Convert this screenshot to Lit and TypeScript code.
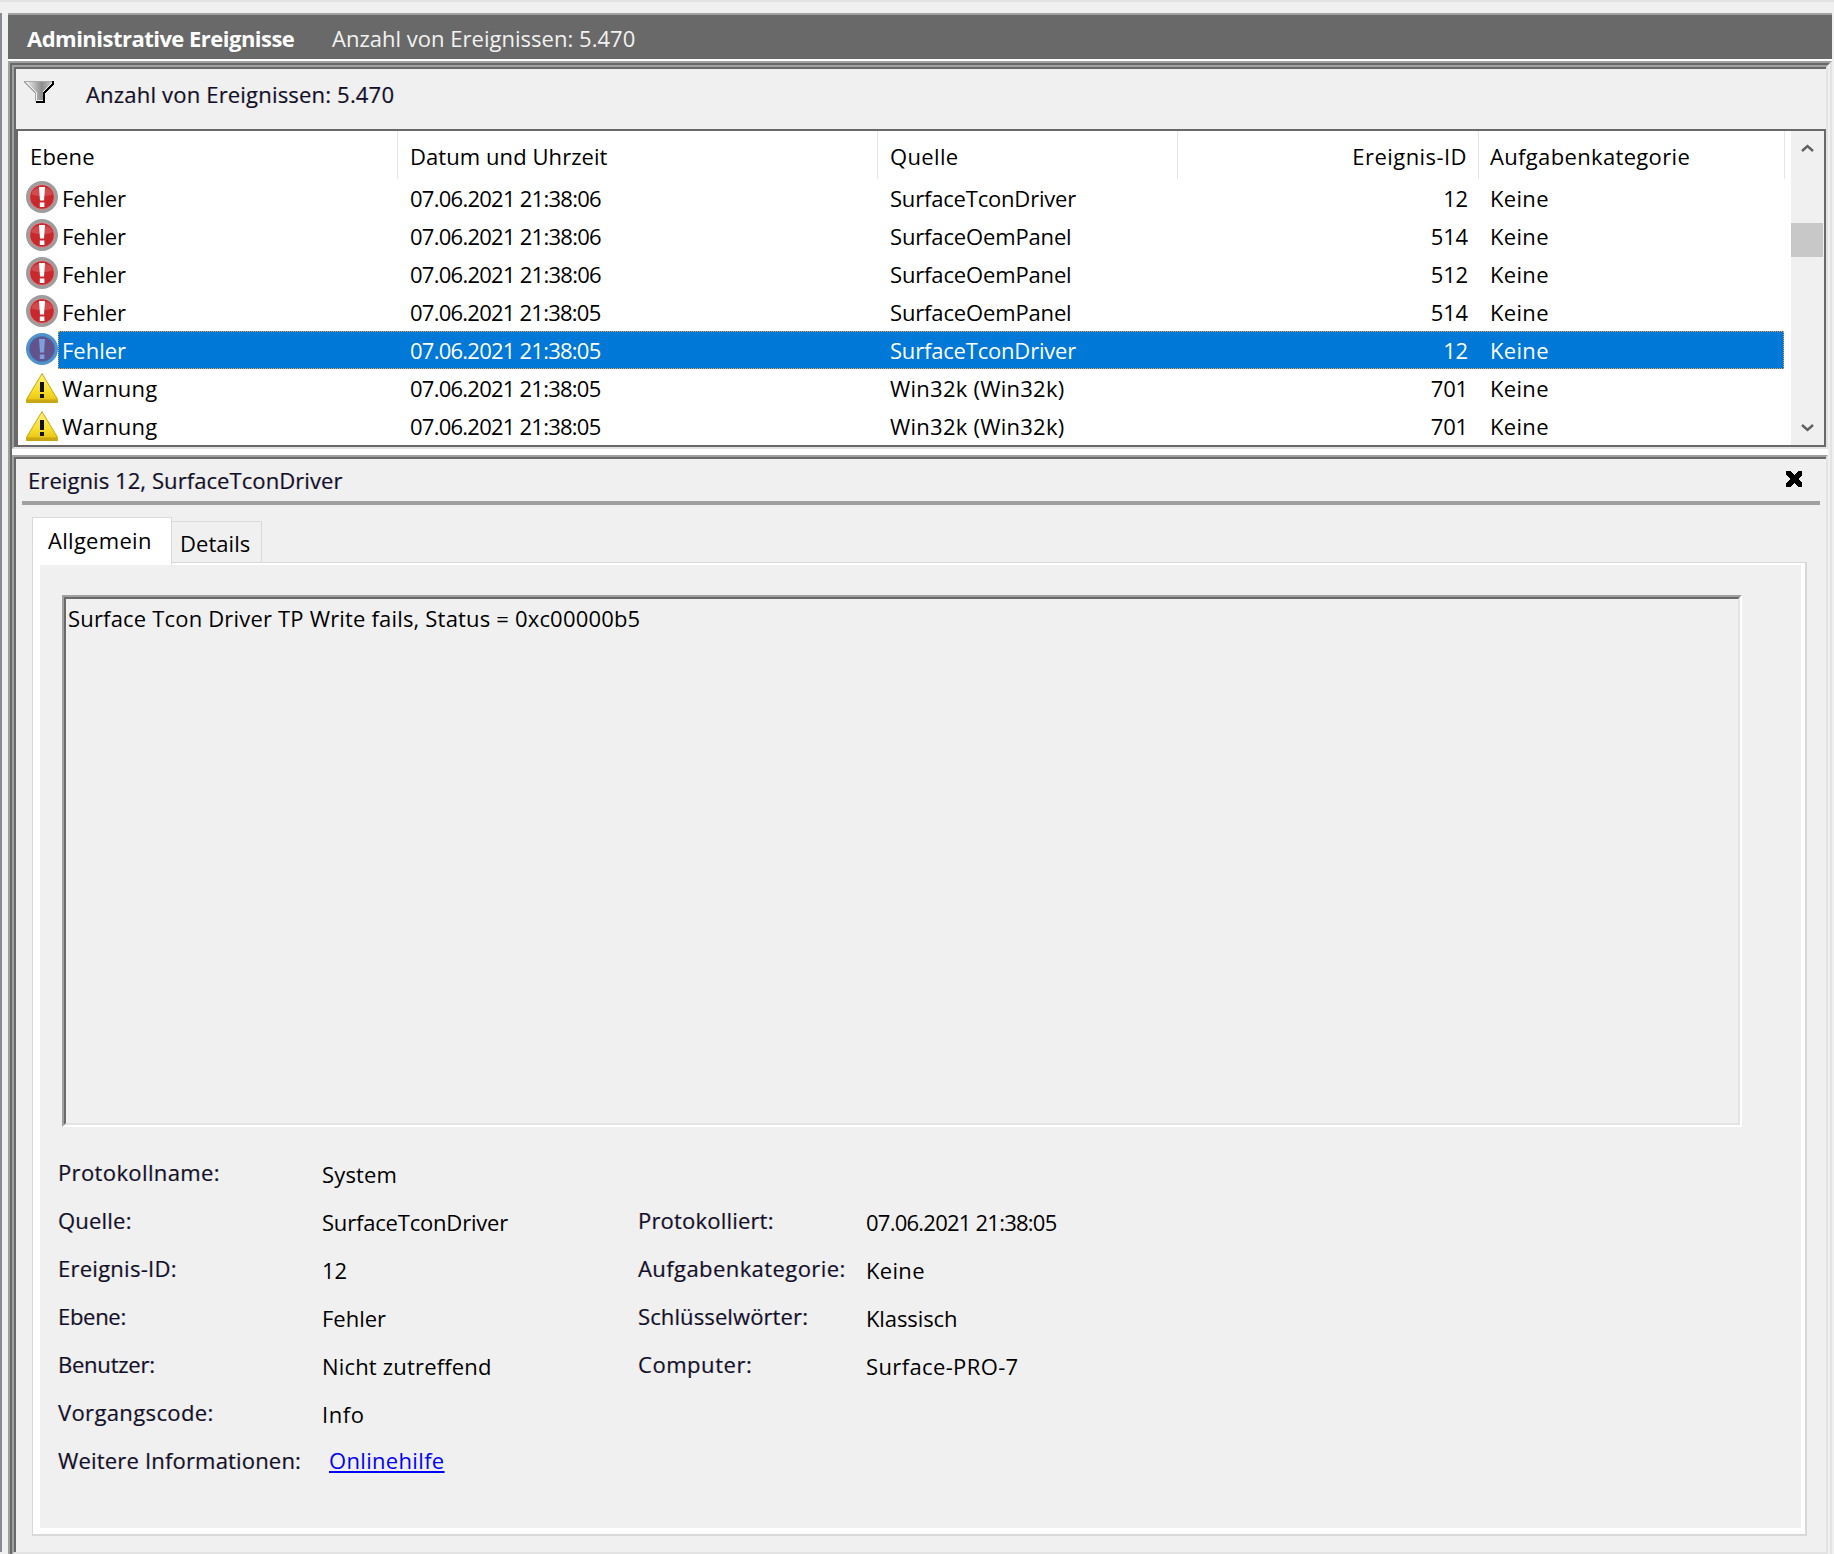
import { LitElement, html, css, svg } from "lit";
import { customElement } from "lit/decorators.js";
import { styleMap } from "lit/directives/style-map.js";

/* Letter spacing per string: Open Sans stands in for a narrower UI face, and digits and
   camel-case words differ in width from plain words, so the fit is data for each text. */
const fit: Record<string, number> = {
  "Administrative Ereignisse": -0.52,
  "Ebene": 0.17, "Datum und Uhrzeit": 0.07, "Quelle": 0.35, "Ereignis-ID": 0.44, "Aufgabenkategorie": 0.34,
  "Fehler": -0.02, "Warnung": 0.2, "Keine": 0.32,
  "07.06.2021 21:38:06": -0.74, "07.06.2021 21:38:05": -0.76,
  "SurfaceTconDriver": -0.19, "SurfaceOemPanel": -0.15, "Win32k (Win32k)": 0.24,
  "12": -0.2, "514": -0.2, "512": -0.2, "701": -0.2,
  "Ereignis 12, SurfaceTconDriver": 0.08, "Allgemein": 0.29, "Details": 0.05,
  "Surface Tcon Driver TP Write fails, Status = 0xc00000b5": 0.18,
  "Protokollname:": 0.38, "Quelle:": 0.21, "Ereignis-ID:": 0.26, "Ebene:": -0.29, "Benutzer:": -0.23,
  "Vorgangscode:": 0.37, "Weitere Informationen:": 0.18,
  "Protokolliert:": 0.19, "Aufgabenkategorie:": 0.42, "Schlüsselwörter:": 0.11, "Computer:": 0.55,
  "System": 0.16, "Nicht zutreffend": 0.18, "Info": 0.55, "Klassisch": -0.1, "Surface-PRO-7": 0.37, "Onlinehilfe": 0.33,
};
const t = (s: string, ls?: number) =>
  html`<span style=${styleMap({ letterSpacing: `${ls ?? fit[s] ?? 0}px` })}>${s}</span>`;

const rows = [
  ["e", "Fehler", "07.06.2021 21:38:06", "SurfaceTconDriver", "12"],
  ["e", "Fehler", "07.06.2021 21:38:06", "SurfaceOemPanel", "514"],
  ["e", "Fehler", "07.06.2021 21:38:06", "SurfaceOemPanel", "512"],
  ["e", "Fehler", "07.06.2021 21:38:05", "SurfaceOemPanel", "514"],
  ["s", "Fehler", "07.06.2021 21:38:05", "SurfaceTconDriver", "12"],
  ["w", "Warnung", "07.06.2021 21:38:05", "Win32k (Win32k)", "701"],
  ["w", "Warnung", "07.06.2021 21:38:05", "Win32k (Win32k)", "701"],
];

const errIcon = (sel: boolean) => html`<svg class="ico" width="32" height="32" viewBox="0 0 32 32">
  <circle cx="16" cy="16" r="14.3" fill="${sel ? "#63528c" : "#c9282d"}" stroke="${sel ? "#4f92cc" : "#9d9d9d"}" stroke-width="3.4"/>
  <circle cx="16" cy="16" r="12.4" fill="none" stroke="${sel ? "#3f6fa8" : "#d8d8d8"}" stroke-width=".7" opacity=".8"/>
  ${sel ? svg`` : svg`<path d="M5 13a11.5 9 0 0 1 22 0c-6 3-16 3-22 0z" fill="#fff" opacity=".16"/>`}
  <path d="M13 6h6l-1 13.5h-4z" fill="${sel ? "#7d9fdc" : "#fff"}"/>
  <rect x="13.8" y="21.5" width="4.6" height="4.5" fill="${sel ? "#7d9fdc" : "#fff"}"/>
</svg>`;

const warnIcon = html`<svg class="ico warn" width="32" height="30" viewBox="0 0 32 30">
  <defs><linearGradient id="wg" x1="0" y1="0" x2="0" y2="1"><stop offset="0" stop-color="#fff27a"/><stop offset=".6" stop-color="#f8de2c"/><stop offset="1" stop-color="#e6be10"/></linearGradient></defs>
  <path d="M16 .6 31.6 26.5V29.5H.4V26.5z" fill="url(#wg)" stroke="#c8a512" stroke-width="1"/>
  <rect x="1" y="26.5" width="30" height="3" fill="#c9a614"/>
  <rect x="14" y="9" width="4" height="10" fill="#111"/>
  <rect x="14" y="21" width="4" height="4" fill="#111"/>
</svg>`;

@customElement("app-root")
export class AppRoot extends LitElement {
  static styles = css`
    :host { display:block; width:1834px; height:1554px; overflow:hidden; background:#f0f0f0;
      font-family:"Open Sans","Noto Sans",sans-serif; font-size:22px; color:#000; }
    .page { border-top:2px solid #e3e3e3; padding-top:11px; display:flex; height:1552px; box-sizing:border-box; }
    .strip { width:2px; background:#868a92; margin-right:6px; flex:none; }
    .col { width:1824px; flex:none; }
    .title { border-top:2px solid #a0a0a0; background:#696969; color:#f2f2f2; box-sizing:border-box;
      display:flex; align-items:center; padding:2px 0 0 19px; height:46px; }
    .title b { font-weight:700; width:305px; color:#fff; }
    .white-line { height:2px; background:#fff; }
    .frame-a { border-top:2px solid #a0a0a0; border-left:2px solid #a0a0a0; border-right:2px solid #e3e3e3; }
    .frame-b { border-top:2px solid #696969; border-left:2px solid #696969; border-right:2px solid #f0f0f0; }
    .pane-a { border-top:2px solid #a0a0a0; border-left:2px solid #a0a0a0; border-right:2px solid #e3e3e3; border-bottom:2px solid #e3e3e3; }
    .pane-b { border-top:2px solid #696969; border-left:2px solid #696969; }
    .filter { height:60px; display:flex; align-items:flex-start; }
    .funnel { margin:12px 0 0 8px; flex:none; display:block; }
    .count { margin:10px 0 0 2px; padding-left:30px; line-height:30px; }
    .fringe { color:#10102a; text-shadow:-.5px 0 rgba(255,140,0,.35), .5px 0 rgba(0,100,255,.35); }
    .list { border:2px solid #696969; height:314px; background:#fff; display:flex; }
    .tbl { width:1773px; flex:none; }
    .head { display:grid; grid-template-columns:380px 480px 300px 301px 306px; height:48px; width:1767px; }
    .hc { border-right:1px solid #e5e5e5; padding:3px 12px 0; box-sizing:border-box; line-height:44px; white-space:nowrap; }
    .hc.r { text-align:right; padding-right:11px; }
    .hc:last-child { padding-left:11px; }
    .row { display:flex; height:38px; }
    .icell { width:40px; flex:none; padding-left:8px; box-sizing:border-box; }
    .ico { display:block; margin-top:2px; }
    .ico.warn { margin-top:4px; }
    .cells { width:1726px; display:grid; grid-template-columns:340px 480px 300px 301px 305px; line-height:38px; box-sizing:border-box; }
    .cells.sel { background:#0078d7; color:#fff; outline:1px dotted #e8a050; outline-offset:-1px; }
    .c { padding:0 12px; white-space:nowrap; }
    .c:first-child { padding-left:4px; }
    .c.r { text-align:right; padding-right:11px; }
    .c:last-child { padding-left:11px; }
    .sb { width:33px; background:#f0f0f0; flex:none; display:flex; flex-direction:column; }
    .chev { display:block; margin-left:10px; flex:none; }
    .chev.up { margin-top:13px; }
    .thumb { height:34px; width:32px; background:#c8c8c8; margin-top:71px; flex:none; }
    .chev.dn { margin-top:167px; }
    .splitter { height:6px; background:#fff; }
    .low { height:1093px; overflow:hidden; }
    .heading { height:42px; display:flex; justify-content:space-between; align-items:center; padding:0 24px 0 12px; box-sizing:border-box; }
    .heading .x { margin-bottom:2px; }
    .x { display:block; }
    .rule { height:4px; margin:0 6px; background:#a0a0a0; }
    .tabs { display:flex; align-items:flex-end; margin:12px 0 0 16px; height:45px; position:relative; z-index:1; }
    .tab-a { width:140px; height:48px; margin-bottom:-3px; background:#fff; border:1px solid #d9d9d9; border-bottom:0; box-sizing:border-box; padding-left:15px; line-height:44px; }
    .tab-b { width:90px; height:41px; border:1px solid #d9d9d9; border-left:0; border-bottom:0; box-sizing:border-box; padding-left:8px; line-height:42px; }
    .tabpane { margin-left:16px; width:1775px; height:974px; box-sizing:border-box; border:solid #d9d9d9; border-width:1px 2px 2px 1px; }
    .inner { height:100%; box-sizing:border-box; background:#f0f0f0; border:solid #fff; border-width:2px 4px 6px 7px; padding-top:30px; }
    .msg-a { margin-left:22px; width:1680px; height:532px; box-sizing:border-box; border:2px solid; border-color:#a0a0a0 #fff #fff #a0a0a0; }
    .msg-b { height:100%; box-sizing:border-box; border:2px solid; border-color:#696969 #e3e3e3 #e3e3e3 #696969; padding:0 0 0 2px; line-height:38px; }
    .info { display:grid; grid-template-columns:264px 316px 228px 1fr; grid-auto-rows:48px; margin:21px 0 0 18px; align-items:center; }
    .v { padding-top:4px; }
    .link { color:#0000ff; text-decoration:underline; padding-left:7px; }
  `;

  render() {
    const info: [string, string, string?, string?][] = [
      ["Protokollname:", "System"],
      ["Quelle:", "SurfaceTconDriver", "Protokolliert:", "07.06.2021 21:38:05"],
      ["Ereignis-ID:", "12", "Aufgabenkategorie:", "Keine"],
      ["Ebene:", "Fehler", "Schlüsselwörter:", "Klassisch"],
      ["Benutzer:", "Nicht zutreffend", "Computer:", "Surface-PRO-7"],
      ["Vorgangscode:", "Info"],
    ];
    return html`<div class="page">
      <div class="strip"></div>
      <div class="col">
        <div class="title"><b>${t("Administrative Ereignisse")}</b>${t("Anzahl von Ereignissen: 5.470", 0.02)}</div>
        <div class="white-line"></div>
        <div class="frame-a"><div class="frame-b">
          <div class="pane-a"><div class="pane-b">
            <div class="filter">
              <svg class="funnel" width="30" height="22" viewBox="0 0 30 22" shape-rendering="crispEdges">
                <defs><linearGradient id="fg" x1="0" y1="0" x2="1" y2="0"><stop offset="0" stop-color="#f8f8f8"/><stop offset=".6" stop-color="#8c8c8c"/><stop offset="1" stop-color="#cfcfcf"/></linearGradient></defs>
                <path d="M1 0H29L19 11V19H13V11z" fill="url(#fg)"/>
                <path d="M28 0h2v3l-9 10v9h-9v-2h7V12l9-10z" fill="#000"/>
                <path d="M0 0h28v1H2l10 11v8h-1V12L0 2z" fill="#a8a8a8"/>
              </svg>
              <div class="count fringe">${t("Anzahl von Ereignissen: 5.470", 0.19)}</div>
            </div>
            <div class="list">
              <div class="tbl">
                <div class="head">
                  <div class="hc">${t("Ebene")}</div><div class="hc">${t("Datum und Uhrzeit")}</div><div class="hc">${t("Quelle")}</div>
                  <div class="hc r">${t("Ereignis-ID")}</div><div class="hc">${t("Aufgabenkategorie")}</div>
                </div>
                ${rows.map((r) => html`<div class="row">
                  <div class="icell">${r[0] === "w" ? warnIcon : errIcon(r[0] === "s")}</div>
                  <div class="cells ${r[0] === "s" ? "sel" : ""}">
                    <div class="c">${t(r[1])}</div><div class="c">${t(r[2])}</div><div class="c">${t(r[3])}</div>
                    <div class="c r">${t(r[4])}</div><div class="c">${t("Keine")}</div>
                  </div>
                </div>`)}
              </div>
              <div class="sb">
                <svg class="chev up" width="13" height="8" viewBox="0 0 13 8"><path d="M1 7 6.5 2 12 7" fill="none" stroke="#606060" stroke-width="2.4"/></svg>
                <div class="thumb"></div>
                <svg class="chev dn" width="13" height="8" viewBox="0 0 13 8"><path d="M1 1 6.5 6 12 1" fill="none" stroke="#606060" stroke-width="2.4"/></svg>
              </div>
            </div>
          </div></div>
          <div class="splitter"></div>
          <div class="pane-a"><div class="pane-b low">
            <div class="heading"><span class="fringe">${t("Ereignis 12, SurfaceTconDriver")}</span>
              <svg class="x" width="16" height="16" viewBox="0 0 16 16" shape-rendering="crispEdges"><path d="M0 0h4l4 4 4-4h4v4l-4 4 4 4v4h-4l-4-4-4 4H0v-4l4-4-4-4z" fill="#000"/></svg>
            </div>
            <div class="rule"></div>
            <div class="tabs"><div class="tab-a">${t("Allgemein")}</div><div class="tab-b">${t("Details")}</div></div>
            <div class="tabpane"><div class="inner">
              <div class="msg-a"><div class="msg-b">${t("Surface Tcon Driver TP Write fails, Status = 0xc00000b5")}</div></div>
              <div class="info">
                ${info.map((i) => html`<div class="fringe">${t(i[0])}</div><div class="v">${t(i[1])}</div><div class="fringe">${i[2] ? t(i[2]) : ""}</div><div class="v">${i[3] ? t(i[3]) : ""}</div>`)}
                <div class="fringe">${t("Weitere Informationen:")}</div><div class="link">${t("Onlinehilfe")}</div>
              </div>
            </div></div>
          </div></div>
        </div></div>
      </div>
    </div>`;
  }
}
